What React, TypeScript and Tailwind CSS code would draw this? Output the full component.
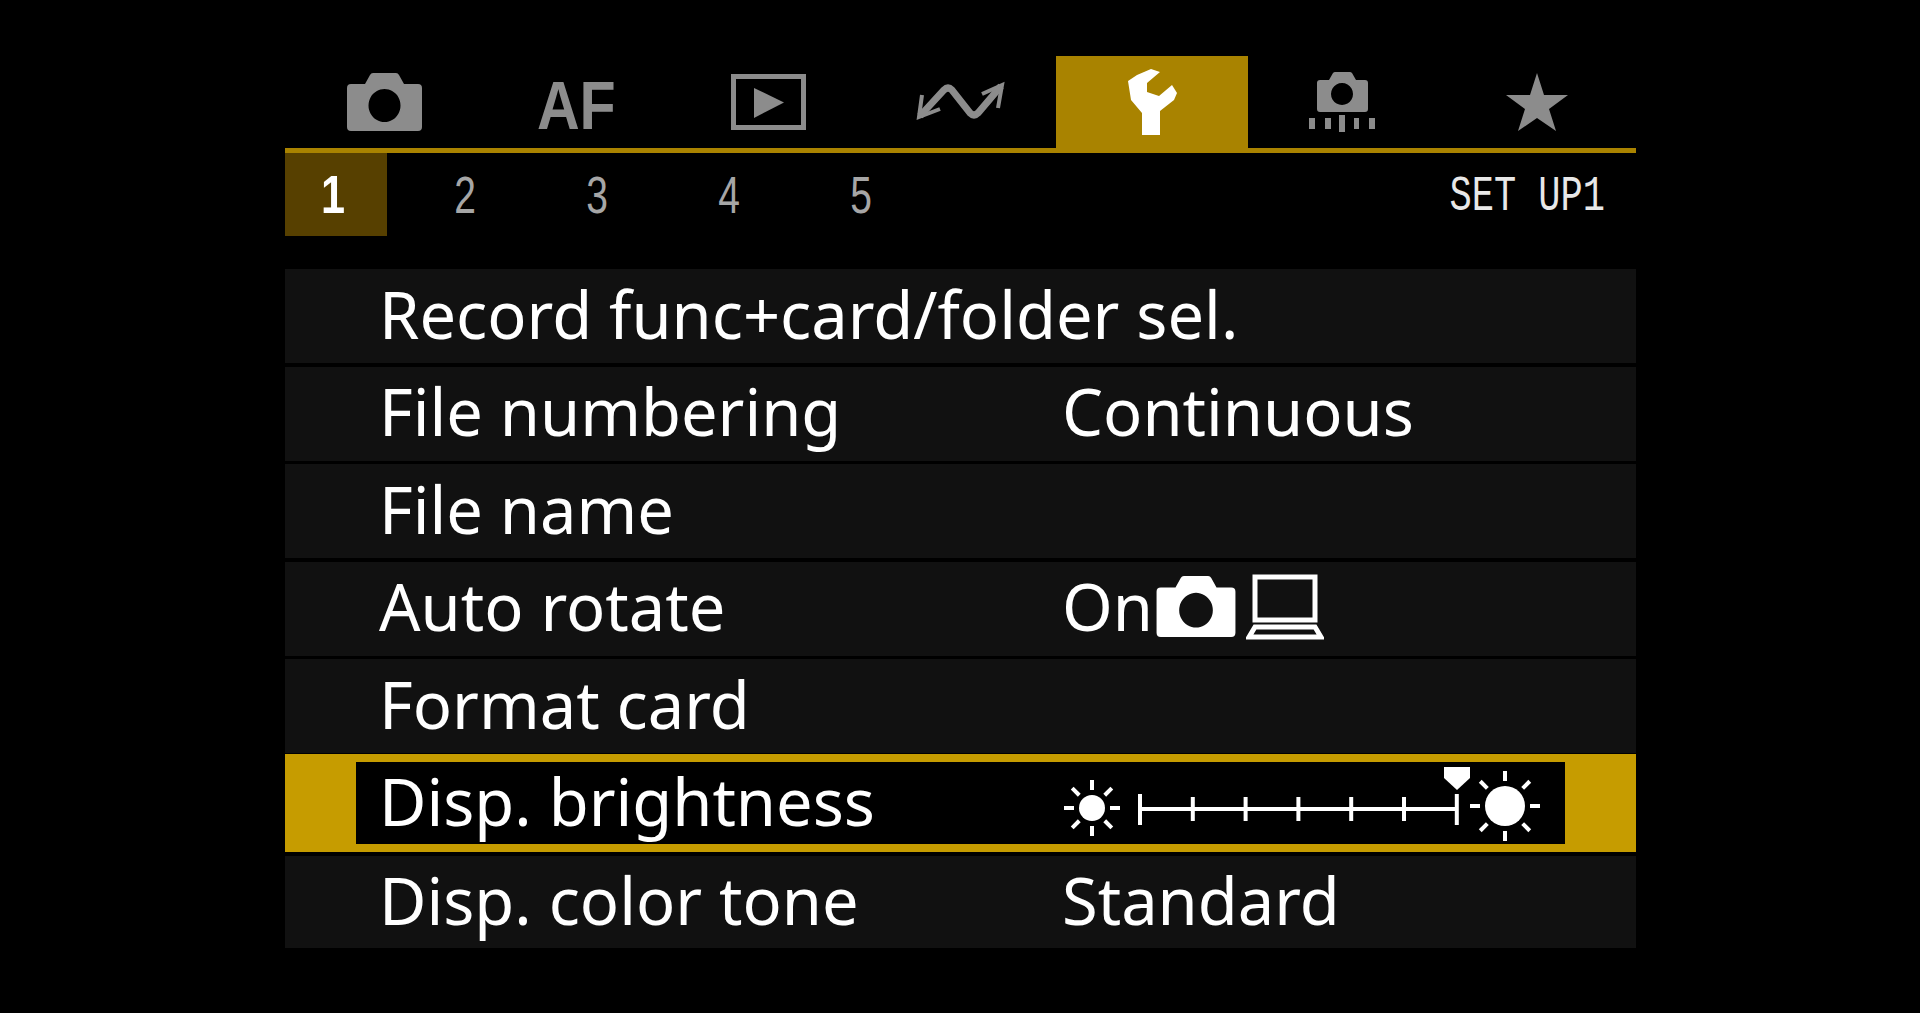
const ROWS: { label: string; value?: string; kind?: "rotate" | "slider" }[] = [
  { label: "Record func+card/folder sel." },
  { label: "File numbering", value: "Continuous" },
  { label: "File name" },
  { label: "Auto rotate", value: "On", kind: "rotate" },
  { label: "Format card" },
  { label: "Disp. brightness", kind: "slider" },
  { label: "Disp. color tone", value: "Standard" },
];

const CAMERA_BODY =
  "M4 11h14l5-9q1-2 3-2h23q2 0 3 2l5 9h14q4 0 4 4v39q0 4-4 4H4q-4 0-4-4V15q0-4 4-4z";

function CameraIcon({ className }: { className: string }) {
  return (
    <svg viewBox="0 0 75 58" className={className}>
      <path fillRule="evenodd" fill="currentColor" d={CAMERA_BODY + "M37.500 16a16 16.500 0 1 0 .01 0z"} />
    </svg>
  );
}

function Tabs() {
  return (
    <div className="flex h-[92px] px-[3px] text-[#8c8c8c]">
      <div className="flex w-[192px] items-center justify-center">
        <CameraIcon className="h-[58px] w-[75px]" />
      </div>
      <div className="flex w-[192px] items-center justify-center pt-[5px] font-['Liberation_Sans',sans-serif] text-[68px] font-bold leading-none">
        <span className="inline-block scale-x-[0.87]">AF</span>
      </div>
      <div className="flex w-[192px] items-center justify-center">
        <svg viewBox="0 0 75 56" className="h-[56px] w-[75px]">
          <rect x="2.500" y="2.500" width="70" height="51" fill="none" stroke="currentColor" strokeWidth="5" />
          <path d="M23 14l30 14.500-30 15.500z" fill="currentColor" />
        </svg>
      </div>
      <div className="flex w-[192px] items-center justify-center">
        <svg viewBox="0 -3 120 70" className="h-[70px] w-[120px]" fill="none" stroke="currentColor">
          <path d="M20 46L44 20Q48 16 52 20L70 43Q74 47 78 43L101 16" strokeWidth="7" />
          <path d="M22 25L19 47 40 39M82 24L102 15 98 38" strokeWidth="4" />
        </svg>
      </div>
      <div className="flex w-[192px] items-center justify-center bg-[#a98300]">
        <svg viewBox="0 0 49 66" className="h-[66px] w-[49px]">
          <path
            d="M23 0l9 3-13 11v9l12 4 13-11 5 8-3 7-14 11v24H14V44L3 31 0 12 9 6z"
            fill="#fff"
          />
        </svg>
      </div>
      <div className="flex w-[192px] items-center justify-center">
        <svg viewBox="2 2 104 80" className="h-[80px] w-[104px]">
          <path
            fillRule="evenodd"
            fill="currentColor"
            d="M30 20h9l4-7q1-1 2-1h15q1 0 2 1l4 7h9q3 0 3 3v26q0 3-3 3H30q-3 0-3-3V23q0-3 3-3zM52 23a11 11 0 1 0 .01 0z"
          />
          <path fill="currentColor" d="M19 58h6v11h-6zM35 58h6v11h-6zM49 55h6v17h-6zM64 58h5v11h-5zM79 58h6v11h-6z" />
        </svg>
      </div>
      <div className="flex w-[192px] items-center justify-center">
        <svg viewBox="0 0 62 58" className="ml-[2px] h-[58px] w-[62px]">
          <path fill="currentColor" d="M31 0l7 22h24L43 36l7 22-19-13-19 13 7-22L0 22h24z" />
        </svg>
      </div>
    </div>
  );
}

function SubTabs() {
  return (
    <div className="flex h-[83px] items-center font-['Liberation_Sans',sans-serif]">
      <div className="flex h-full w-[102px] items-center justify-center bg-[#574000] pr-[5px] text-[54px] font-bold text-white">
        <span className="inline-block scale-x-[0.8]">1</span>
      </div>
      <div className="ml-[12px] flex text-[52px] text-[#a6a6a6]">
        {["2", "3", "4", "5"].map((n) => (
          <span key={n} className="w-[132px] scale-x-[0.75] text-center">
            {n}
          </span>
        ))}
      </div>
      <span className="ml-auto origin-right scale-x-[0.74] pr-[42px] pt-[3px] font-['Liberation_Mono',monospace] text-[50px] text-[#e8e8e8]">
        SET UP1
      </span>
    </div>
  );
}

function RotateIcons() {
  return (
    <div className="ml-[3px] flex items-center gap-[10px]">
      <CameraIcon className="h-[61px] w-[80px] text-white" />
      <svg viewBox="0 0 78 66" className="h-[66px] w-[78px]" fill="none" stroke="#fff" strokeWidth="5">
        <rect x="9" y="3" width="60" height="43" />
        <path d="M9 53h60l6 10H3z" />
      </svg>
    </div>
  );
}

function Sun({ size, r, gap, ray }: { size: number; r: number; gap: number; ray: number }) {
  const c = size / 2;
  const angles = [0, 45, 90, 135, 180, 225, 270, 315];
  return (
    <svg viewBox={`0 0 ${size} ${size}`} width={size} height={size}>
      <circle cx={c} cy={c} r={r} fill="#fff" />
      {angles.map((a) => (
        <line
          key={a}
          x1={c}
          y1={c - r - gap}
          x2={c}
          y2={c - r - gap - ray}
          stroke="#fff"
          strokeWidth="4"
          transform={`rotate(${a} ${c} ${c})`}
        />
      ))}
    </svg>
  );
}

function BrightnessSlider() {
  return (
    <div className="flex items-center">
      <div className="mt-[12px]">
        <Sun size={60} r={13} gap={5} ray={10} />
      </div>
      <svg viewBox="0 0 334 70" className="ml-[16px] h-[70px] w-[334px]">
        <g stroke="#fff" strokeWidth="4">
          <line x1="2" y1="42" x2="319" y2="42" />
          {[0, 1, 2, 3, 4, 5, 6].map((i) => (
            <line
              key={i}
              x1={2 + i * 52.800}
              x2={2 + i * 52.800}
              y1={i === 0 || i === 6 ? 27 : 30}
              y2={i === 0 || i === 6 ? 58 : 54}
            />
          ))}
        </g>
        <path d="M306 0h26v11l-13 12-13-12z" fill="#fff" />
      </svg>
      <div className="-ml-[3px] mt-[8px]">
        <Sun size={72} r={20} gap={5} ray={10} />
      </div>
    </div>
  );
}

function Row({ row }: { row: (typeof ROWS)[number] }) {
  const selected = row.kind === "slider";
  return (
    <div
      className={
        selected
          ? "-mt-[3px] flex h-[98px] items-stretch bg-[#c69c00] px-[71px] py-[8px]"
          : "flex h-[94px] items-stretch bg-[#111111] pb-[4px] last:h-[92px] last:pb-[3px]"
      }
    >
      <div
        className={
          selected
            ? "flex flex-1 items-center bg-black pb-[2px] pl-[23px]"
            : "flex flex-1 items-center pl-[94px]"
        }
      >
        <span className="w-[683px] whitespace-nowrap">{row.label}</span>
        {row.value && <span>{row.value}</span>}
        {row.kind === "rotate" && <RotateIcons />}
        {selected && <BrightnessSlider />}
      </div>
    </div>
  );
}

export default function App() {
  return (
    <div className="h-[1013px] w-full overflow-hidden bg-black pt-[56px] font-['Noto_Sans','Open_Sans',sans-serif] text-white">
      <div className="ml-[285px] w-[1351px]">
        <Tabs />
        <div className="h-[5px] bg-[#a98300]" />
        <SubTabs />
        <div className="mt-[33px] flex flex-col gap-[3.600px] text-[65px] leading-none">
          {ROWS.map((row) => (
            <Row key={row.label} row={row} />
          ))}
        </div>
      </div>
    </div>
  );
}
